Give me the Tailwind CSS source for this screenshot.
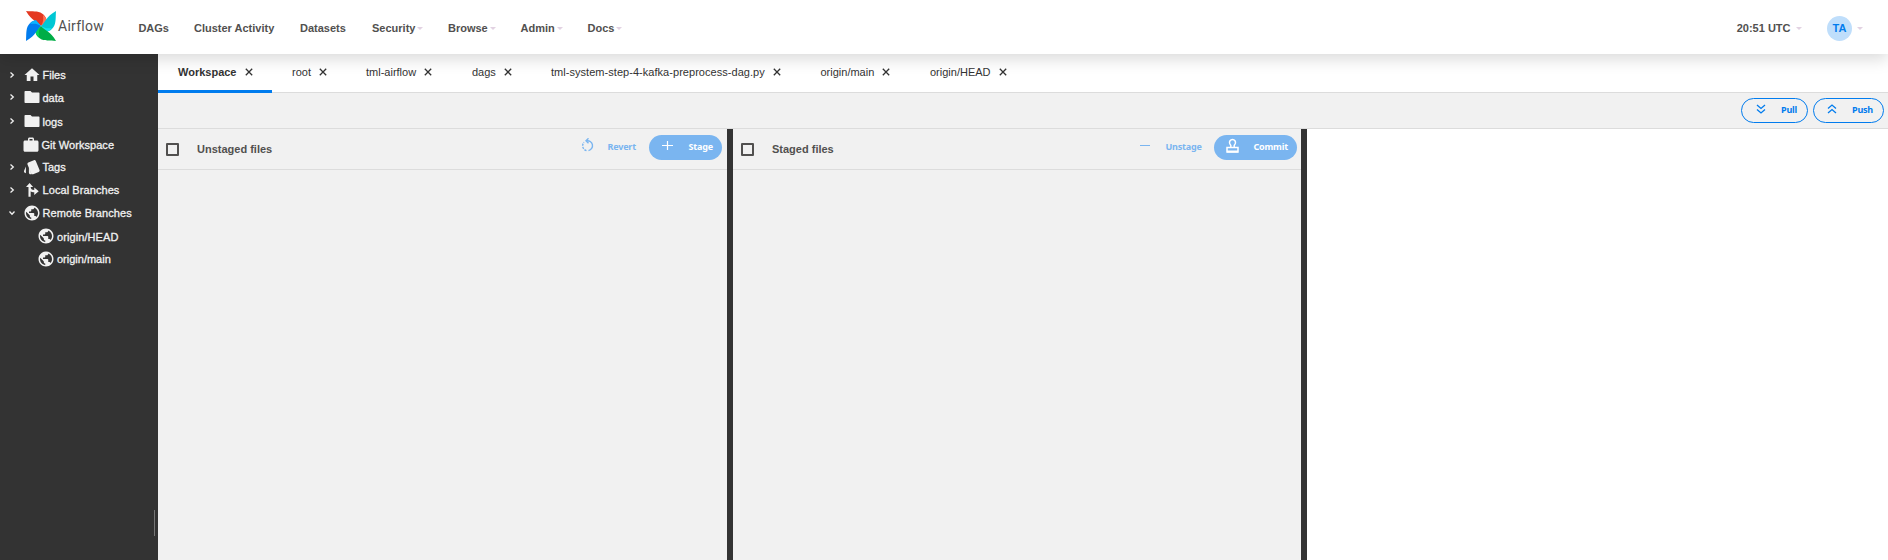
<!DOCTYPE html>
<html lang="en">
<head>
<meta charset="utf-8">
<title>Airflow</title>
<script src="https://cdn.jsdelivr.net/npm/@tailwindcss/browser@4"></script>
</head>
<body class="w-[1888px] h-[560px] overflow-hidden bg-white flex flex-col font-['Liberation_Sans',Arial,sans-serif] text-[11px] leading-[14px] whitespace-nowrap">
<svg class="hidden">
  <symbol id="home" viewBox="0 0 24 24"><path d="M10 20v-6h4v6h5v-8h3L12 3 2 12h3v8z"/></symbol>
  <symbol id="folder" viewBox="0 0 24 24"><path d="M10 4H3c-.6 0-1 .4-1 1v14c0 .6.4 1 1 1h18c.6 0 1-.4 1-1V7c0-.6-.4-1-1-1h-9z"/></symbol>
  <symbol id="work" viewBox="0 0 24 24"><path d="M20 6h-4V4c0-1.11-.89-2-2-2h-4c-1.11 0-2 .89-2 2v2H4c-1.11 0-2 .89-2 2v11c0 1.11.89 2 2 2h16c1.11 0 2-.89 2-2V8c0-1.11-.89-2-2-2zm-6 0h-4V4h4v2z"/></symbol>
  <symbol id="style" viewBox="0 0 24 24"><path d="M2.53 19.65l1.34.56v-9.03l-2.43 5.86c-.41 1.02.08 2.19 1.09 2.61zm19.5-3.7L17.07 3.98c-.31-.75-1.04-1.21-1.81-1.23-.26 0-.53.04-.79.15L7.1 5.95c-.75.31-1.21 1.03-1.23 1.8-.01.27.04.54.15.8l4.96 11.97c.31.76 1.05 1.22 1.83 1.23.26 0 .52-.05.77-.15l7.36-3.05c1.02-.42 1.51-1.59 1.09-2.6zM7.88 19.75c0 1.1.9 2 2 2h1.45l-3.45-8.34v6.34z"/></symbol>
  <symbol id="branch" viewBox="0 0 24 24"><path d="M7.300 21V8H4L8.800 2.500 13.500 8H10.200c.2 2.300 1.500 4 4.800 4V8.500l6 5-6 5V15c-2.200 0-3.800-.5-4.800-1.500V21z"/></symbol>
  <symbol id="globe" viewBox="0 0 24 24"><path d="M12 2C6.48 2 2 6.48 2 12s4.48 10 10 10 10-4.48 10-10S17.52 2 12 2zm-1 17.93c-3.95-.49-7-3.85-7-7.93 0-.62.08-1.210.21-1.79L9 15v1c0 1.100.9 2 2 2v1.930zm6.900-2.540c-.26-.81-1-1.390-1.900-1.390h-1v-3c0-.55-.45-1-1-1H8v-2h2c.55 0 1-.45 1-1V7h2c1.100 0 2-.9 2-2v-.41c2.930 1.190 5 4.060 5 7.410 0 2.080-.8 3.970-2.100 5.390z"/></symbol>
  <symbol id="chev" viewBox="0 0 6 6"><path d="M1.500.5 4.300 3 1.500 5.500" fill="none" stroke="currentColor" stroke-width="1.300"/></symbol>
  <symbol id="x" viewBox="0 0 8 8"><path d="M.8.8l6.400 6.400M7.200.8.8 7.200" fill="none" stroke="currentColor" stroke-width="1.300"/></symbol>
  <symbol id="caret" viewBox="0 0 6 3"><path d="M0 0h6L3 3z"/></symbol>
</svg>

<header class="relative z-10 h-[54px] shrink-0 bg-white flex items-center text-[#51504f] font-bold shadow-[0_5px_15px_rgba(0,0,0,0.15)]">
  <svg class="ml-[26px] w-[30px] h-[30px] -mt-[2px]" viewBox="0 0 30 30">
    <g><path fill="#e43921" d="M0 0C6 .5 12-.3 16 2.500 19 4.500 20.500 7 20.700 10L15 15C11 10 6 10.500 0 0z"/><path fill="#ff7557" d="M17 4C19.500 6 20.500 8 20.700 10L15 15C17.500 11 17.500 8 17 4z"/></g>
    <g transform="rotate(90 15 15)"><path fill="#00c7d4" d="M0 0C6 .5 12-.3 16 2.500 19 4.500 20.500 7 20.700 10L15 15C11 10 6 10.500 0 0z"/><path fill="#11e1ee" d="M17 4C19.500 6 20.500 8 20.700 10L15 15C17.500 11 17.500 8 17 4z"/></g>
    <g transform="rotate(180 15 15)"><path fill="#00ad46" d="M0 0C6 .5 12-.3 16 2.500 19 4.500 20.500 7 20.700 10L15 15C11 10 6 10.500 0 0z"/><path fill="#04d659" d="M17 4C19.500 6 20.500 8 20.700 10L15 15C17.500 11 17.500 8 17 4z"/></g>
    <g transform="rotate(270 15 15)"><path fill="#017cee" d="M0 0C6 .5 12-.3 16 2.500 19 4.500 20.500 7 20.700 10L15 15C11 10 6 10.500 0 0z"/><path fill="#0cb6ff" d="M17 4C19.500 6 20.500 8 20.700 10L15 15C17.500 11 17.500 8 17 4z"/></g>
  </svg>
  <span class="ml-[2px] w-[80.500px] -mt-[2px] font-[Roboto] font-normal text-[14px] tracking-[0.25px]">Airflow</span>
  <nav class="flex items-center pt-[2px]">
    <span class="w-[55.500px] tracking-[-0.1px]">DAGs</span>
    <span class="w-[106px]">Cluster Activity</span>
    <span class="w-[72px]">Datasets</span>
    <span class="w-[76px] flex items-center gap-[2px]">Security<svg class="w-[6px] h-[3px] fill-[#e2d2e2]"><use href="#caret"/></svg></span>
    <span class="w-[72.500px] flex items-center gap-[2px]">Browse<svg class="w-[6px] h-[3px] fill-[#e2d2e2]"><use href="#caret"/></svg></span>
    <span class="w-[67px] flex items-center gap-[2px]">Admin<svg class="w-[6px] h-[3px] fill-[#e2d2e2]"><use href="#caret"/></svg></span>
    <span class="flex items-center gap-[2px]">Docs<svg class="w-[6px] h-[3px] fill-[#e2d2e2]"><use href="#caret"/></svg></span>
  </nav>
  <div class="ml-auto flex items-center pt-[2px] pr-[25px]">
    <span>20:51 UTC</span>
    <svg class="ml-[5.500px] w-[6px] h-[3px] fill-[#e2d2e2]"><use href="#caret"/></svg>
    <span class="ml-[25px] w-[25px] h-[25px] rounded-full bg-[#bfdefb] text-[#017cee] flex items-center justify-center">TA</span>
    <svg class="ml-[5px] w-[6px] h-[3px] fill-[#e2d2e2]"><use href="#caret"/></svg>
  </div>
</header>

<div class="flex grow min-h-0">
  <aside class="relative w-[158px] shrink-0 bg-[#333] text-[#f1f1f1] fill-[#f1f1f1] pt-[9px] [-webkit-text-stroke:0.3px_#f1f1f1]">
    <div class="h-[23px] flex items-center pl-[9px]"><svg class="w-[6px] h-[6px]"><use href="#chev"/></svg><svg class="ml-[7.500px] w-[18px] h-[18px]"><use href="#home"/></svg><span class="ml-[2px] pt-px">Files</span></div>
    <div class="h-[22px] flex items-center pl-[9px]"><svg class="w-[6px] h-[6px]"><use href="#chev"/></svg><svg class="ml-[7.500px] w-[18px] h-[18px]"><use href="#folder"/></svg><span class="ml-[2px] pt-px">data</span></div>
    <div class="h-[26px] flex items-center pl-[9px]"><svg class="w-[6px] h-[6px]"><use href="#chev"/></svg><svg class="ml-[7.500px] w-[18px] h-[18px]"><use href="#folder"/></svg><span class="ml-[2px] pt-px">logs</span></div>
    <div class="h-[21px] flex items-center pl-[21.500px]"><svg class="w-[18px] h-[18px]"><use href="#work"/></svg><span class="ml-[2px] pt-px tracking-[0.05px]">Git Workspace</span></div>
    <div class="h-[23px] flex items-center pl-[9px]"><svg class="w-[6px] h-[6px]"><use href="#chev"/></svg><svg class="ml-[7.500px] w-[18px] h-[18px]"><use href="#style"/></svg><span class="ml-[2px] pt-px">Tags</span></div>
    <div class="h-[23px] flex items-center pl-[9px]"><svg class="w-[6px] h-[6px]"><use href="#chev"/></svg><svg class="ml-[7.500px] w-[18px] h-[18px]"><use href="#branch"/></svg><span class="ml-[2px] pt-px tracking-[0.08px]">Local Branches</span></div>
    <div class="h-[23px] flex items-center pl-[9px]"><svg class="w-[6px] h-[6px] rotate-90"><use href="#chev"/></svg><svg class="ml-[7.500px] w-[18px] h-[18px]"><use href="#globe"/></svg><span class="ml-[2px] pt-px tracking-[0.08px]">Remote Branches</span></div>
    <div class="h-[24px] flex items-center pl-[37px]"><svg class="w-[18px] h-[18px]"><use href="#globe"/></svg><span class="ml-[2px] pt-px tracking-[0.08px]">origin/HEAD</span></div>
    <div class="h-[21px] flex items-center pl-[37px]"><svg class="w-[18px] h-[18px]"><use href="#globe"/></svg><span class="ml-[2px] pt-px">origin/main</span></div>
    <div class="absolute left-[154px] top-[456px] w-px h-[26px] bg-[#777]"></div>
  </aside>

  <main class="grow flex flex-col min-w-0">
    <div class="h-[39px] shrink-0 border-b border-[#dcdcdc] flex text-[#333]">
      <div class="w-[114px] h-[39px] border-b-3 border-[#017cee] pl-[20px] flex items-center gap-[8px] font-bold">Workspace<svg class="w-[8px] h-[8px]"><use href="#x"/></svg></div>
      <div class="h-[36px] pl-[20px] w-[74px] flex items-center gap-[8px]">root<svg class="w-[8px] h-[8px]"><use href="#x"/></svg></div>
      <div class="h-[36px] pl-[20px] w-[106px] flex items-center gap-[8px]">tml-airflow<svg class="w-[8px] h-[8px]"><use href="#x"/></svg></div>
      <div class="h-[36px] pl-[20px] w-[79px] flex items-center gap-[8px]">dags<svg class="w-[8px] h-[8px]"><use href="#x"/></svg></div>
      <div class="h-[36px] pl-[20px] w-[269.500px] flex items-center gap-[8px]"><span class="tracking-[0.04px]">tml-system-step-4-kafka-preprocess-dag.py</span><svg class="w-[8px] h-[8px]"><use href="#x"/></svg></div>
      <div class="h-[36px] pl-[20px] w-[109.500px] flex items-center gap-[8px]">origin/main<svg class="w-[8px] h-[8px]"><use href="#x"/></svg></div>
      <div class="h-[36px] pl-[20px] flex items-center gap-[8px]">origin/HEAD<svg class="w-[8px] h-[8px]"><use href="#x"/></svg></div>
    </div>
    <div class="h-[36px] shrink-0 bg-[#f1f1f1] border-b border-[#dcdcdc] flex justify-end items-center gap-[5px] pr-[4px] font-['Noto_Sans'] font-bold text-[9px] tracking-[-0.2px] text-[#017cee]">
      <div class="w-[67px] h-[25px] border border-[#017cee] rounded-full flex items-center pl-[14px]"><svg class="w-[10px] h-[10px] mb-[4px]" viewBox="0 0 10 10" fill="none" stroke="currentColor" stroke-width="1.300"><path d="M1 1l4 3.500L9 1M1 5.500 5 9l4-3.500"/></svg><span class="ml-[15px] pb-px">Pull</span></div>
      <div class="w-[71px] h-[25px] border border-[#017cee] rounded-full flex items-center pl-[13px]"><svg class="w-[10px] h-[10px] mb-[4px]" viewBox="0 0 10 10" fill="none" stroke="currentColor" stroke-width="1.300"><path d="M1 4.500 5 1l4 3.500M1 9l4-3.500L9 9"/></svg><span class="ml-[15px] pb-px">Push</span></div>
    </div>
    <div class="grow flex min-h-0">
      <section class="w-[569px] bg-[#f1f1f1]">
        <div class="h-[41px] border-b border-[#dcdcdc] flex items-center pl-[8px]">
          <span class="w-[13px] h-[13px] mt-px border-2 border-[#51504f] rounded-[1px]"></span>
          <span class="ml-[18px] font-bold text-[#51504f]">Unstaged files</span>
          <div class="ml-auto mr-[5px] -mt-[4px] flex items-center font-['Noto_Sans'] font-bold text-[9px] tracking-[-0.2px] text-[#7ab5f0]">
            <svg class="w-[13px] h-[14px] mb-[4px]" viewBox="0 0 13 14" fill="none" stroke="currentColor" stroke-width="1.400"><path d="M5.500 2.800A5 5 0 0 1 7.500 12.600"/><path stroke-dasharray="2.200 1" d="M5.500 12.600A5 5 0 0 1 3 4.300"/><path d="M7.500.3 5 2.800l2.500 2.500"/></svg>
            <span class="ml-[14px] w-[41.500px] pb-px">Revert</span>
            <div class="w-[73px] h-[25px] rounded-full bg-[#7ab5f0] text-white flex items-center pl-[13px]"><svg class="w-[11px] h-[11px] mb-[4px]" viewBox="0 0 11 11" fill="none" stroke="currentColor" stroke-width="1.200"><path d="M0 5.500h11M5.500 1v9"/></svg><span class="ml-[15.500px] pb-px">Stage</span></div>
          </div>
        </div>
      </section>
      <div class="w-[6px] bg-[#333]"></div>
      <section class="w-[568px] bg-[#f1f1f1]">
        <div class="h-[41px] border-b border-[#dcdcdc] flex items-center pl-[8px]">
          <span class="w-[13px] h-[13px] mt-px border-2 border-[#51504f] rounded-[1px]"></span>
          <span class="ml-[18px] font-bold text-[#51504f]">Staged files</span>
          <div class="ml-auto mr-[4px] -mt-[4px] flex items-center font-['Noto_Sans'] font-bold text-[9px] tracking-[-0.2px] text-[#7ab5f0]">
            <div class="w-[10px] h-px bg-[#7ab5f0] mb-[3px]"></div>
            <span class="ml-[16px] w-[48.500px] pb-px">Unstage</span>
            <div class="w-[83px] h-[25px] rounded-full bg-[#7ab5f0] text-white flex items-center pl-[12px]"><svg class="w-[13px] h-[15px] mb-[4px]" viewBox="0 0 13 15" fill="none" stroke="currentColor" stroke-width="1.500"><path d="M1 14V9.500h11V14zM4.800 9V7.500L3.700 5.500a3 3 0 1 1 5.600 0L8.200 7.500V9"/><path d="M1 13.500h11" stroke-width="2"/></svg><span class="ml-[14.500px] pb-px">Commit</span></div>
          </div>
        </div>
      </section>
      <div class="w-[6px] bg-[#333]"></div>
    </div>
  </main>
</div>
</body>
</html>
